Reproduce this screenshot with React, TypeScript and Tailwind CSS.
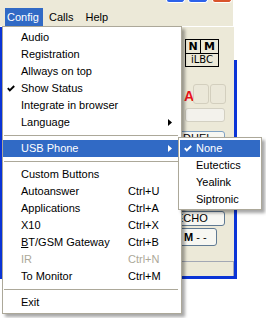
import React from "react";

const Check = ({ color }: { color: string }) => (
  <svg width="8" height="7" viewBox="0 0 8 7" className="absolute left-[4px] top-[5px]">
    <polyline points="0.8,3.2 2.8,5.4 7.2,1" fill="none" stroke={color} strokeWidth="1.9" />
  </svg>
);

const Arrow = ({ color }: { color: string }) => (
  <svg width="4" height="7" viewBox="0 0 4 7" className="absolute right-[9px] top-[5px]">
    <polygon points="0,0 4,3.5 0,7" fill={color} />
  </svg>
);

type Item = {
  label: React.ReactNode;
  shortcut?: string;
  checked?: boolean;
  arrow?: boolean;
  active?: boolean;
  disabled?: boolean;
  sep?: boolean;
};

const mainItems: Item[] = [
  { label: "Audio" },
  { label: "Registration" },
  { label: "Allways on top" },
  { label: "Show Status", checked: true },
  { label: "Integrate in browser" },
  { label: "Language", arrow: true },
  { sep: true, label: "" },
  { label: "USB Phone", arrow: true, active: true },
  { sep: true, label: "" },
  { label: "Custom Buttons" },
  { label: "Autoanswer", shortcut: "Ctrl+U" },
  { label: "Applications", shortcut: "Ctrl+A" },
  { label: "X10", shortcut: "Ctrl+X" },
  {
    label: (
      <>
        <span className="underline">B</span>T/GSM Gateway
      </>
    ),
    shortcut: "Ctrl+B",
  },
  { label: "IR", shortcut: "Ctrl+N", disabled: true },
  { label: "To Monitor", shortcut: "Ctrl+M" },
  { sep: true, label: "" },
  { label: "Exit" },
];

const subItems: Item[] = [
  { label: "None", checked: true, active: true },
  { label: "Eutectics" },
  { label: "Yealink" },
  { label: "Siptronic" },
];

function MenuRow({ item, pl }: { item: Item; pl: string }) {
  if (item.sep) {
    return (
      <div className="h-[9px] pt-[4px] pl-[1px] pr-[3px]">
        <div className="h-[1px] bg-[#aca899]" />
      </div>
    );
  }
  const color = item.active ? "#ffffff" : item.disabled ? "#aca899" : "#000000";
  return (
    <div
      className={`relative h-[17px] flex items-center ${pl} ${
        item.active ? "bg-[#316ac5] text-white" : item.disabled ? "text-[#aca899]" : "text-black"
      }`}
    >
      {item.checked && <Check color={color} />}
      <span className="w-[107px] whitespace-nowrap">{item.label}</span>
      {item.shortcut && <span className="whitespace-nowrap">{item.shortcut}</span>}
      {item.arrow && <Arrow color={color} />}
    </div>
  );
}

export default function App() {
  const blue = "bg-[#0a34d6]";
  return (
    <div className="relative w-[266px] h-[318px] bg-white overflow-hidden font-['Liberation_Sans',Arial,sans-serif] text-[11px] leading-none">
      <div className="w-[237px] flex flex-col">
        {/* title bar remnant */}
        <div className="h-[8px] w-[233px] bg-[#ece9d8] flex items-start pl-[166px]">
          <div className="w-[19px] h-[3px] bg-[#2c62ea] border-x border-b border-white rounded-b-[3px]" />
          <div className="w-[20px] h-[3px] ml-[3px] bg-[#2c62ea] border-x border-b border-white rounded-b-[3px]" />
          <div className="w-[20px] h-[3px] ml-[4px] bg-[#d9542c] border-x border-b border-white rounded-b-[3px]" />
        </div>
        {/* menubar */}
        <div className="h-[18px] w-[233px] bg-[#ece9d8] flex items-stretch pl-[5px]">
          <div className="w-[38px] pl-[2px] flex items-center bg-[#316ac5] text-white">Config</div>
          <div className="pl-[6px] flex items-center text-black">Calls</div>
          <div className="pl-[12px] flex items-center text-black">Help</div>
        </div>
        <div className="h-[1px] w-[233px] bg-white" />
        {/* body */}
        <div className="flex h-[249px]">
          <div className={`w-[2px] ${blue}`} />
          <div className="w-[232px] flex flex-col bg-[#ece9d8]">
            <div className="flex h-[234px]">
              <div className="w-[181px]" />
              <div className="w-[51px] flex flex-col">
                {/* codec table */}
                <div className="mt-[12px] ml-[2px] w-[34px] h-[28px] border border-black flex flex-col font-['DejaVu_Sans',sans-serif]">
                  <div className="h-[14px] flex border-b border-black">
                    <div className="w-[15px] border-r border-black flex items-center justify-center font-bold text-[11px]">N</div>
                    <div className="flex-1 flex items-center justify-center font-bold text-[11px]">M</div>
                  </div>
                  <div className="flex-1 flex items-center justify-center text-[10px]">iLBC</div>
                </div>
                {/* A + boxes */}
                <div className="mt-[17px] h-[20px] flex">
                  <div className="w-[10px] self-end mb-[1px] text-[14px] font-bold text-[#e8141c] pl-[1px] font-['Liberation_Sans',sans-serif]">A</div>
                  <div className="w-[16px] rounded-[3px] border border-[#d3cfbe] bg-[#ebe8d9]" />
                  <div className="w-[16px] ml-[1px] rounded-[3px] border border-[#d3cfbe] bg-[#ebe8d9]" />
                </div>
                {/* field */}
                <div className="mt-[4px] ml-[2px] w-[40px] h-[14px] rounded-[3px] border border-[#d3d0c2] bg-[#f3f2ec]" />
                {/* DHEL button */}
                <div className="mt-[9px] ml-[-20px] w-[62px] h-[16px] rounded-[3px] border border-[#7fa2c4] bg-[#f7f7f2] pl-[19px] pt-[1px] text-[11px] text-black">
                  DHEL
                </div>
                {/* ECHO button */}
                <div className="mt-[64px] ml-[-20px] w-[62px] h-[15px] rounded-[3px] border border-[#607a93] bg-[#f7f7f2] pl-[12px] flex items-center text-[11px] text-black">
                  ECHO
                </div>
                {/* M - - button */}
                <div className="mt-[2px] ml-[-20px] w-[54px] h-[18px] rounded-[3px] border border-[#607a93] bg-[#f7f7f2] pl-[20px] flex items-center text-[11px] text-black whitespace-pre">
                  <b>M</b> - -
                </div>
              </div>
            </div>
            {/* status bar */}
            <div className="h-[15px] border-t border-r border-[#a3a8b4]" />
          </div>
          <div className="w-[3px] flex flex-col">
            <div className="h-[33px] bg-white" />
            <div className={`flex-1 ${blue}`} />
          </div>
        </div>
        <div className={`h-[3px] w-[237px] ${blue}`} />
      </div>

      {/* Config dropdown */}
      <div className="absolute left-[2px] top-[26px] w-[180px] border border-[#aca899] bg-white pt-[2px] pb-[2px] shadow-[3px_3px_3px_rgba(0,0,0,0.35)]">
        {mainItems.map((it, i) => (
          <MenuRow key={i} item={it} pl="pl-[18px]" />
        ))}
      </div>

      {/* USB Phone submenu */}
      <div className="absolute left-[178px] top-[137px] w-[84px] border border-[#aca899] bg-white pt-[2px] pb-[1px] px-[1px] shadow-[3px_3px_3px_rgba(0,0,0,0.35)]">
        {subItems.map((it, i) => (
          <MenuRow key={i} item={it} pl="pl-[16px]" />
        ))}
      </div>
    </div>
  );
}
